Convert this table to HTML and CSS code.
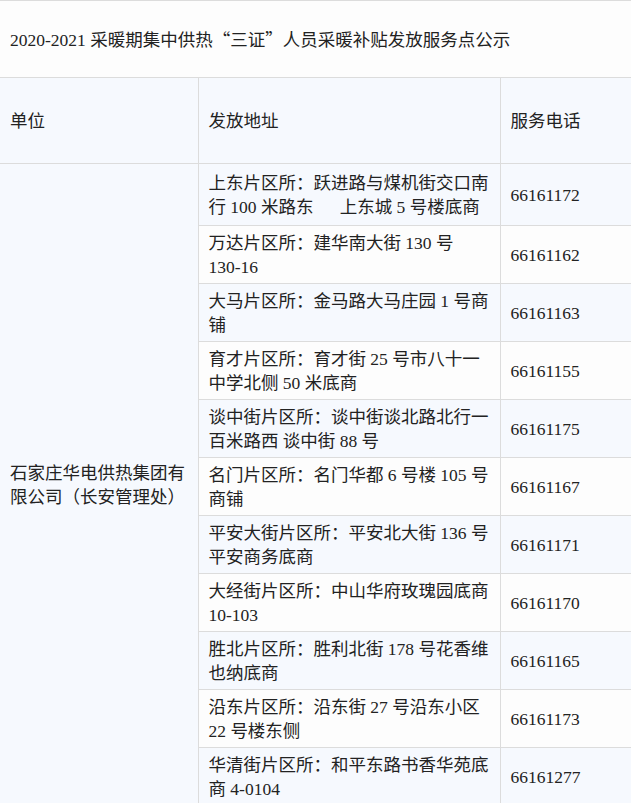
FILE: index.html
```html
<!DOCTYPE html>
<html lang="zh-CN">
<head>
    <meta charset="UTF-8">
    <meta name="viewport" content="width=device-width, initial-scale=1.0">
    <title>采暖补贴发放服务点公示</title>
    <link rel="stylesheet" href="styles.css">
</head>
<body>

<table class="notice">
    <colgroup>
        <col class="c-unit">
        <col class="c-addr">
        <col class="c-tel">
    </colgroup>
    <tr class="title-row">
        <td colspan="3">2020-2021 采暖期集中供热<span class="cjk">“三证”</span>人员采暖补贴发放服务点公示</td>
    </tr>
    <tr class="head-row">
        <td>单位</td>
        <td>发放地址</td>
        <td>服务电话</td>
    </tr>
    <tr class="odd first">
        <td rowspan="11">石家庄华电供热集团有限公司（长安管理处）</td>
        <td>上东片区所：跃进路与煤机街交口南行 100 米路东&emsp;&ensp;上东城 5 号楼底商</td>
        <td>66161172</td>
    </tr>
    <tr class="even">
        <td>万达片区所：建华南大街 130 号 130-16</td>
        <td>66161162</td>
    </tr>
    <tr class="odd">
        <td>大马片区所：金马路大马庄园 1 号商铺</td>
        <td>66161163</td>
    </tr>
    <tr class="even">
        <td>育才片区所：育才街 25 号市八十一中学北侧 50 米底商</td>
        <td>66161155</td>
    </tr>
    <tr class="odd">
        <td>谈中街片区所：谈中街谈北路北行一百米路西 谈中街 88 号</td>
        <td>66161175</td>
    </tr>
    <tr class="even">
        <td>名门片区所：名门华都 6 号楼 105 号商铺</td>
        <td>66161167</td>
    </tr>
    <tr class="odd">
        <td>平安大街片区所：平安北大街 136 号平安商务底商</td>
        <td>66161171</td>
    </tr>
    <tr class="even">
        <td>大经街片区所：中山华府玫瑰园底商 10-103</td>
        <td>66161170</td>
    </tr>
    <tr class="odd">
        <td>胜北片区所：胜利北街 178 号花香维也纳底商</td>
        <td>66161165</td>
    </tr>
    <tr class="even">
        <td>沿东片区所：沿东街 27 号沿东小区 22 号楼东侧</td>
        <td>66161173</td>
    </tr>
    <tr class="odd">
        <td>华清街片区所：和平东路书香华苑底商 4-0104</td>
        <td>66161277</td>
    </tr>
</table>

</body>
</html>
```

FILE: styles.css
```css
body { margin: 0; padding: 0; background-color: #fff; overflow: hidden; font-family: "Liberation Serif", "Noto Sans CJK SC", serif; font-size: 17.5px; color: #222; }
.cjk { font-family: "Noto Sans CJK SC", sans-serif; }
.notice { border-collapse: collapse; width: 700px; table-layout: fixed; }
.c-unit { width: 198px; }
.c-addr { width: 302px; }
.c-tel { width: 200px; }
.notice td { border: 1px solid #dcdcdc; padding: 4.5px 10px; line-height: 24px; text-align: left; vertical-align: middle; }
.notice td:first-child { border-left: none; }
.title-row td { height: 76px; background-color: #fdfdfd; padding-top: 0; padding-bottom: 0; }
.head-row td { height: 76px; background-color: #f6f9fe; }
.odd td { background-color: #f6f9fe; }
.even td { background-color: #fdfdfd; }
.first td { height: 52px; }
```
